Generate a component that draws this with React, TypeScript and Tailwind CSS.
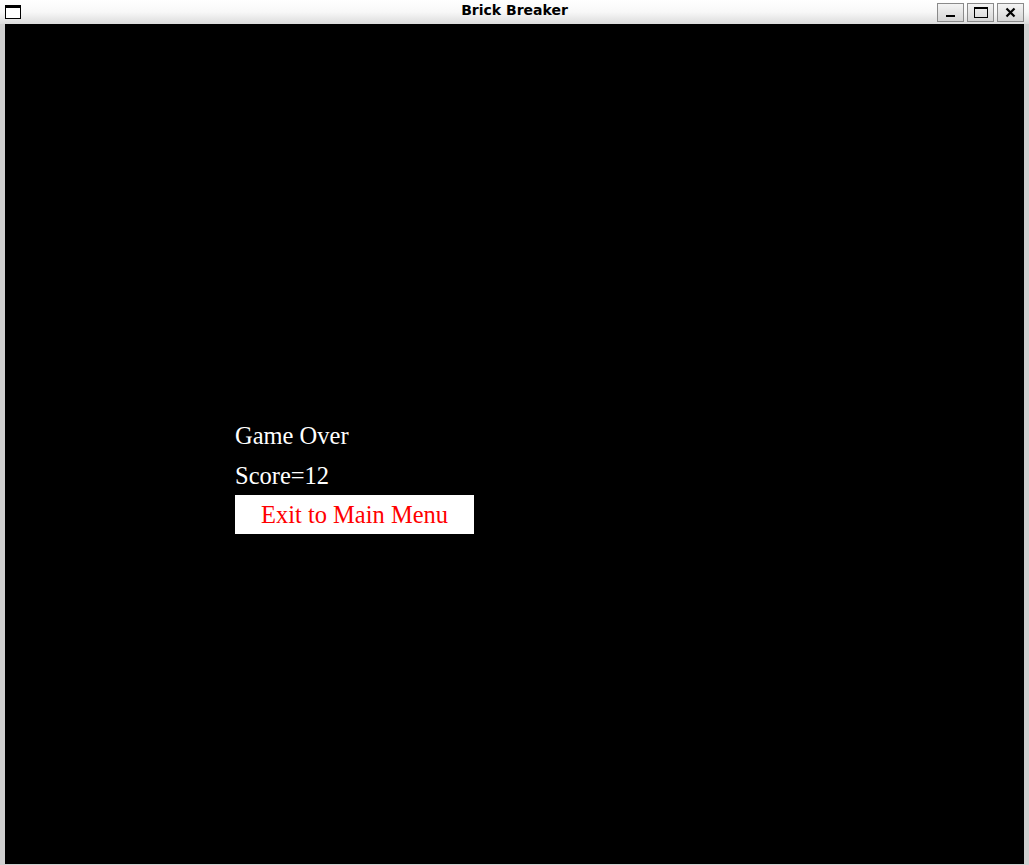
import React from 'react';

function TitleBar() {
  return (
    <div className="h-6 grid grid-cols-[1fr_auto_1fr] items-center bg-gradient-to-b from-white via-[#f8f8f8] to-[#dcdcdc]">
      {/* window icon */}
      <div className="ml-[5px] w-4 h-[14px] border border-black border-t-[3px] bg-white" />
      <div className="pb-[4px] text-center text-[14px] font-bold text-black font-['DejaVu_Sans',sans-serif] leading-none">
        Brick Breaker
      </div>
      <div className="flex gap-[3px] mr-[5px] justify-end">
        <TitleButton>
          <div className="w-[9px] h-[2px] bg-black mt-[8px]" />
        </TitleButton>
        <TitleButton>
          <div className="w-[14px] h-[11px] border border-black border-t-2" />
        </TitleButton>
        <TitleButton>
          <svg width="11" height="11" viewBox="0 0 11 11">
            <path d="M1.5 1.5 L9.5 9.5 M9.5 1.5 L1.5 9.5" stroke="black" strokeWidth="2.2" />
          </svg>
        </TitleButton>
      </div>
    </div>
  );
}

function TitleButton({ children }: { children: React.ReactNode }) {
  return (
    <div className="w-[27px] h-[19px] border border-[#8a8a8a] bg-gradient-to-b from-[#f4f4f4] to-[#d6d6d6] flex items-center justify-center">
      {children}
    </div>
  );
}

export default function App() {
  return (
    <div className="w-[1029px] h-[865px] bg-[#d0d0d0] flex flex-col overflow-hidden">
      <TitleBar />
      <div className="flex-1 mx-[5px] mb-px bg-black pl-[230px] pt-[400px] font-['Liberation_Serif',serif] text-[24.5px] leading-6">
        <div className="text-white">Game Over</div>
        <div className="text-white mt-4">Score=12</div>
        <div className="mt-[7px] w-[239px] h-[39px] bg-white text-[#ff0000] flex items-center justify-center">
          Exit to Main Menu
        </div>
      </div>
    </div>
  );
}
